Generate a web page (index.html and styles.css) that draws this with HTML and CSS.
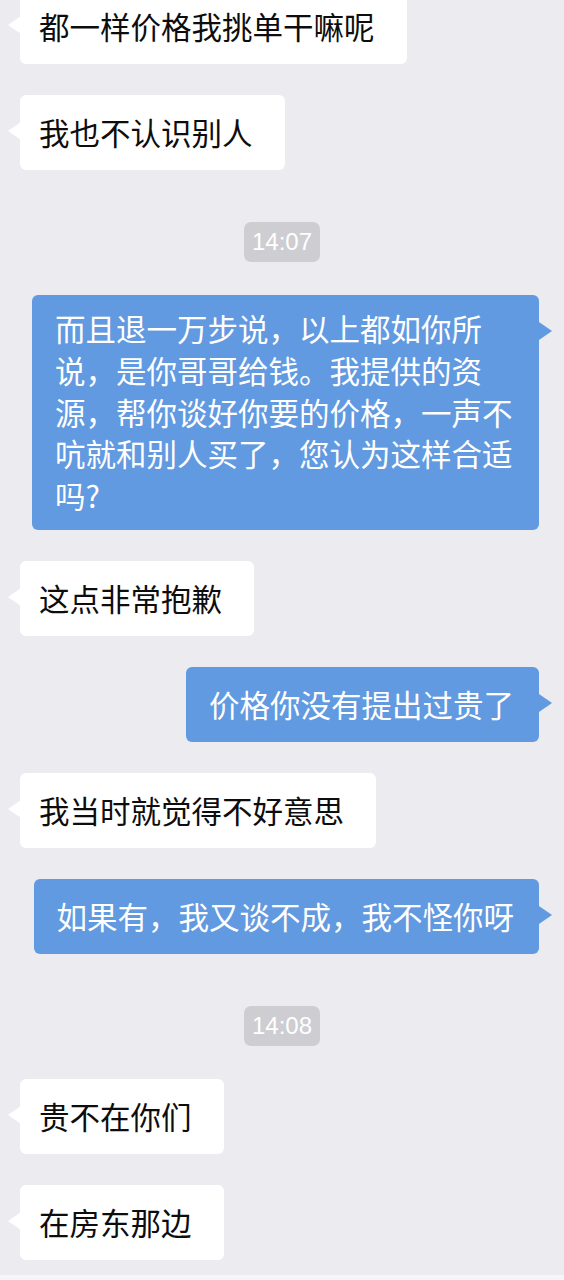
FILE: index.html
```html
<!DOCTYPE html>
<html lang="zh-CN">
<head>
<meta charset="utf-8">
<title>聊天</title>
<link rel="stylesheet" href="styles.css">
</head>
<body>
<div class="chat">
  <div class="row in"><div class="bubble">都一样价格我挑单干嘛呢</div></div>
  <div class="row in"><div class="bubble">我也不认识别人</div></div>
  <div class="time"><span>14:07</span></div>
  <div class="row out"><div class="bubble">而且退一万步说，以上都如你所说，是你哥哥给钱。我提供的资源，帮你谈好你要的价格，一声不吭就和别人买了，您认为这样合适吗?</div></div>
  <div class="row in"><div class="bubble">这点非常抱歉</div></div>
  <div class="row out"><div class="bubble">价格你没有提出过贵了</div></div>
  <div class="row in"><div class="bubble">我当时就觉得不好意思</div></div>
  <div class="row out"><div class="bubble">如果有，我又谈不成，我不怪你呀</div></div>
  <div class="time"><span>14:08</span></div>
  <div class="row in"><div class="bubble">贵不在你们</div></div>
  <div class="row in"><div class="bubble">在房东那边</div></div>
</div>
<div class="bottom-bar"></div>
</body>
</html>
```

FILE: styles.css
```css
* { box-sizing: border-box; }
html, body {
  margin: 0;
  padding: 0;
  background: #ebebf0;
  height: 1280px;
  overflow: hidden;
}
body {
  font-family: "Noto Sans CJK SC", "Noto Sans", sans-serif;
  position: relative;
}
.chat {
  display: flex;
  flex-direction: column;
  gap: 31px;
  margin-top: -11px;
}
.row {
  display: flex;
}
.row.in {
  justify-content: flex-start;
  padding-left: 20px;
}
.row.out {
  justify-content: flex-end;
  padding-right: 25px;
}
.bubble {
  position: relative;
  min-height: 75px;
  display: flex;
  align-items: center;
  font-size: 30.5px;
  line-height: 41.8px;
  border-radius: 6px;
  padding-top: 13px;
  padding-bottom: 13px;
}
.in .bubble {
  background: #ffffff;
  color: #0d0d0d;
  padding-left: 19px;
  padding-right: 32px;
}
.out .bubble {
  background: #619ae0;
  color: #ffffff;
  max-width: 507px;
  padding-left: 23px;
  padding-right: 25px;
}
.bubble::before {
  content: "";
  position: absolute;
  top: 27px;
  width: 0;
  height: 0;
  border-top: 9px solid transparent;
  border-bottom: 9px solid transparent;
}
.in .bubble::before {
  left: -12px;
  border-right: 13px solid #ffffff;
}
.out .bubble::before {
  right: -13px;
  border-left: 13px solid #619ae0;
}
.time {
  display: flex;
  justify-content: center;
  margin: 21px 0 2px;
}
.time span {
  display: block;
  height: 40px;
  line-height: 40px;
  padding: 0 8px;
  border-radius: 7px;
  background: #cdcdd2;
  color: #ffffff;
  font-family: "Liberation Sans", Arial, sans-serif;
  font-size: 24px;
}
.bottom-bar {
  position: absolute;
  left: 0;
  right: 0;
  top: 1275px;
  height: 5px;
  background: #f6f6f8;
}
```
